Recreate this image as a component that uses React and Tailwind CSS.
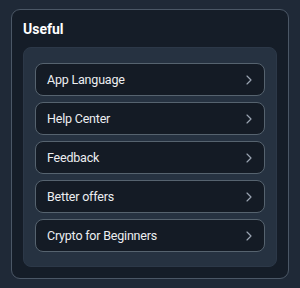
import React from "react";
import { ChevronRight } from "lucide-react";

const items = ["App Language", "Help Center", "Feedback", "Better offers", "Crypto for Beginners"];

const App = () => {
    return (
        <div className="w-[300px] h-[288px] bg-[#1f2937] px-[11px] py-[9px] font-['Roboto',sans-serif]">
            <div className="h-full rounded-[9px] border border-[#4b5766] bg-[#151d28] px-[11px] pt-2 pb-[11px] flex flex-col">
                <h2 className="text-[14px] leading-5 font-bold text-white mt-[1px] mb-[8px]">Useful</h2>
                <div className="flex-1 rounded-[8px] bg-[#263241] border border-[#2c3848] px-[11px] pt-[15px] pb-[13px] flex flex-col gap-[6px]">
                    {items.map((item) => (
                        <div
                            key={item}
                            className="h-[33px] flex items-center justify-between rounded-[8px] border-[1.5px] border-[#56636f] bg-[#141b25] pl-[11px] pr-[7px]"
                        >
                            <span className="text-[12.5px] leading-4 pt-[1px] tracking-[-0.2px] text-[#eceef1]">{item}</span>
                            <ChevronRight size={16} strokeWidth={1.75} className="text-[#9aa4b1]" />
                        </div>
                    ))}
                </div>
            </div>
        </div>
    )
}

export default App
